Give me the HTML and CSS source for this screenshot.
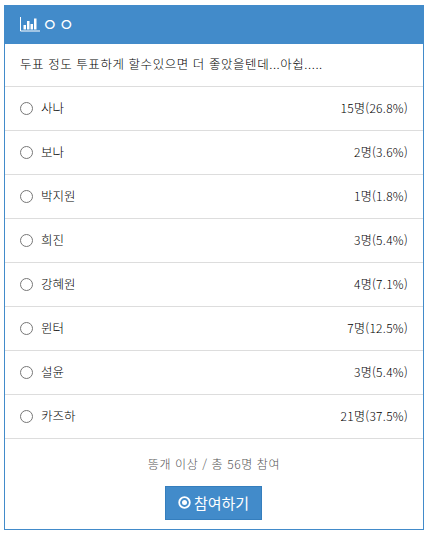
FILE: index.html
```html
<!DOCTYPE html>
<html lang="ko">
<head>
<meta charset="utf-8">
<title>투표</title>
<link rel="stylesheet" href="styles.css">
</head>
<body>
<div class="panel">
  <div class="panel-head">
    <svg class="chart-icon" width="20" height="15" viewBox="0 0 20 15" aria-hidden="true">
      <path d="M0.500 0v14h19.500" fill="none" stroke="#fff" stroke-width="1"/>
      <path d="M3.500 8h2.500v4.500H3.500zM7 4h2.500v8.500H7zM10.500 7H13v5.500h-2.500zM14 1.500h2.500v11H14z" fill="#fff"/>
    </svg>
    <span class="panel-title">ㅇ ㅇ</span>
  </div>
  <div class="question">두표 정도 투표하게 할수있으면 더 좋았을텐데...아쉽.....</div>
  <ul class="options">
    <li class="option"><span class="radio"></span><span class="name">사나</span><span class="count">15명(26.8%)</span></li>
    <li class="option"><span class="radio"></span><span class="name">보나</span><span class="count">2명(3.6%)</span></li>
    <li class="option"><span class="radio"></span><span class="name">박지원</span><span class="count">1명(1.8%)</span></li>
    <li class="option"><span class="radio"></span><span class="name">희진</span><span class="count">3명(5.4%)</span></li>
    <li class="option"><span class="radio"></span><span class="name">강혜원</span><span class="count">4명(7.1%)</span></li>
    <li class="option"><span class="radio"></span><span class="name">윈터</span><span class="count">7명(12.5%)</span></li>
    <li class="option"><span class="radio"></span><span class="name">설윤</span><span class="count">3명(5.4%)</span></li>
    <li class="option"><span class="radio"></span><span class="name">카즈하</span><span class="count">21명(37.5%)</span></li>
  </ul>
  <div class="panel-foot">
    <p class="summary">똥개 이상 / 총 56명 참여</p>
    <button class="submit" type="button">
      <svg width="13" height="13" viewBox="0 0 13 13" aria-hidden="true">
        <circle cx="6.500" cy="6.500" r="5.300" fill="none" stroke="#fff" stroke-width="1.800"/>
        <circle cx="6.500" cy="6.500" r="2.500" fill="#fff"/>
      </svg>
      <span>참여하기</span>
    </button>
  </div>
</div>
</body>
</html>
```
FILE: styles.css
```css
* { box-sizing: border-box; }
html, body { margin: 0; padding: 0; background: #fff; }
body {
  padding: 5px 5px 4px 4px;
  font-family: "Noto Sans CJK KR", "Liberation Sans", sans-serif;
  font-size: 12.500px;
  font-weight: 300;
  color: #000;
}
.panel {
  height: 525px;
  border: 1px solid #428bca;
  display: flex;
  flex-direction: column;
}
.panel-head {
  height: 39px;
  flex: none;
  background: #428bca;
  margin: -1px -1px 0;
  display: flex;
  align-items: center;
  padding-left: 16px;
  gap: 2px;
  color: #fff;
}
.chart-icon { flex: none; }
.panel-title { font-size: 17px; font-weight: 400; line-height: 18px; margin-top: -1px; word-spacing: -4px; }
.question {
  height: 43px;
  flex: none;
  display: flex;
  align-items: center;
  padding: 0 15px 3px;
  border-bottom: 1px solid #ddd;
  white-space: nowrap;
  letter-spacing: 0.550px;
}
.options { list-style: none; margin: 0; padding: 0; }
.option {
  height: 44px;
  display: flex;
  align-items: center;
  padding: 0 15px 2px;
  border-bottom: 1px solid #ddd;
}
.radio {
  width: 13px;
  height: 13px;
  border: 1px solid #777;
  border-radius: 50%;
  background: #fff;
  flex: none;
  margin-right: 8px;
  margin-top: 2px;
}
.name { flex: 1; }
.count { white-space: nowrap; font-size: 12px; letter-spacing: 0.300px; }
.panel-foot {
  flex: 1;
  display: flex;
  flex-direction: column;
  align-items: center;
  padding-top: 16px;
}
.summary { margin: 0 0 14px; line-height: 17px; color: #555; font-size: 12px; letter-spacing: 0.600px; }
.submit {
  width: 97px;
  height: 34px;
  margin-right: 1px;
  background: #428bca;
  border: 1px solid #357ebd;
  border-radius: 0;
  color: #fff;
  font: inherit;
  font-size: 15px;
  font-weight: 400;
  display: flex;
  align-items: center;
  justify-content: center;
  gap: 3px;
  padding: 0 0 1px;
}
```
